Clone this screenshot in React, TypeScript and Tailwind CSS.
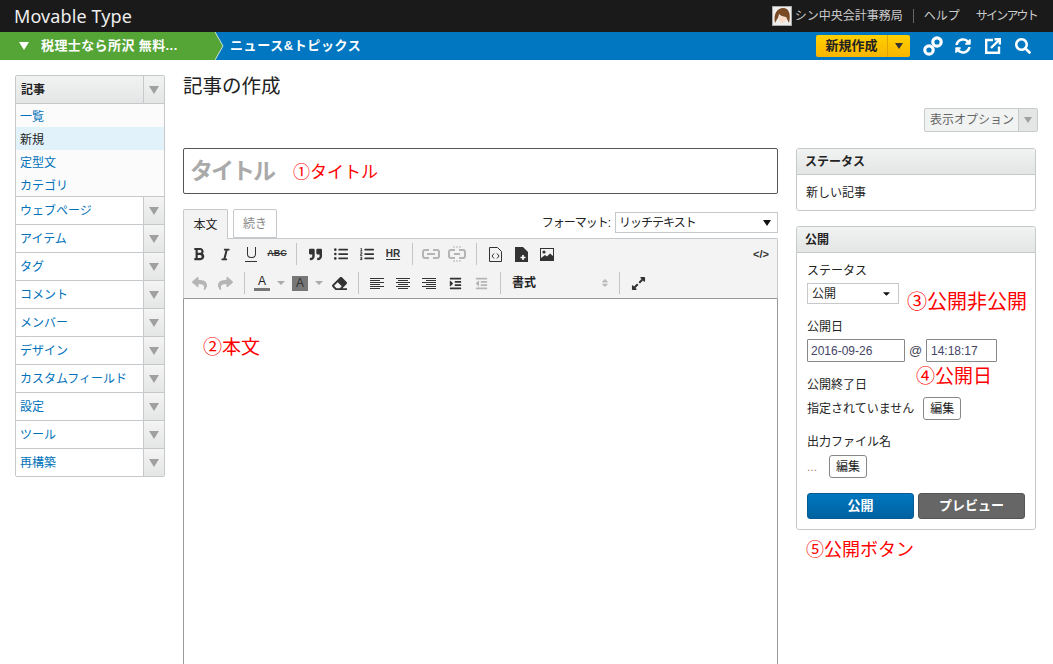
import {
  FaBold,
  FaItalic,
  FaQuoteRight,
  FaListUl,
  FaListOl,
  FaReply,
  FaShare,
  FaEraser,
  FaIndent,
  FaOutdent,
  FaExpandAlt,
  FaSyncAlt,
  FaSearch,
  FaCaretDown,
  FaSort,
} from "react-icons/fa";

const menus = ["ウェブページ", "アイテム", "タグ", "コメント", "メンバー", "デザイン", "カスタムフィールド", "設定", "ツール", "再構築"];
const subMenus = ["一覧", "新規", "定型文", "カテゴリ"];

const Tri = () => (
  <span className="w-0 h-0 border-x-[5px] border-x-transparent border-t-[8px] border-t-[#a0a0a0]" />
);

const Sep = () => (
  <span className="w-[12px] h-[22px] flex justify-center shrink-0">
    <span className="w-px h-full bg-[#c4c4c4]" />
  </span>
);

const Btn = ({ children, off }: { children: React.ReactNode; off?: boolean }) => (
  <span className={`w-[26px] h-[22px] flex items-center justify-center shrink-0 ${off ? "text-[#b5b5b5]" : "text-[#333]"}`}>
    {children}
  </span>
);

const Red = ({ children, className }: { children: React.ReactNode; className: string }) => (
  <span className={`absolute text-[#ff0000] whitespace-nowrap leading-none ${className}`}>{children}</span>
);

const PanelHead = ({ children }: { children: React.ReactNode }) => (
  <div className="h-[26px] px-[8px] flex items-center font-bold text-[#222] bg-gradient-to-b from-[#f1f2f2] to-[#e4e5e5] border-b border-[#c5c9cc] rounded-t-[3px]">
    {children}
  </div>
);

// horizontal text lines of the align buttons
const Lines = ({ rows }: { rows: [number, number][] }) => (
  <svg width="14" height="12" viewBox="0 0 14 12" stroke="#333">
    {rows.map(([a, b], i) => (
      <path key={i} d={`M${a} ${i * 2 + 1.5} H${b}`} />
    ))}
  </svg>
);

export default function App() {
  return (
    <div className="relative w-[1053px] h-[664px] overflow-hidden bg-white text-[12px] text-[#222] font-['Liberation_Sans','Noto_Sans_CJK_JP',sans-serif]">
      <header className="h-[32px] bg-[#1a1a1a] flex items-center justify-between pl-[14px] pr-[16px]">
        <span className="text-[#eee] text-[18px] font-['Noto_Sans',sans-serif] tracking-[0.1px]">Movable Type</span>
        <div className="flex items-center text-[#ccc]">
          <svg width="20" height="20" viewBox="0 0 20 20" className="mr-[3px]">
            <rect x="0.5" y="0.5" width="19" height="19" fill="#eee" stroke="#aaa" />
            <path d="M3 17 C1 7 6 2 11 2 C17 2 19 8 17 17 L14 11 C11 11 8 9 7 8 C7 11 5 13 3 17Z" fill="#7a4a25" />
            <path d="M7 9 C9 10 12 11 14 11 C15 15 12 17 10 17 C8 17 6 14 7 9Z" fill="#fbdcc8" />
          </svg>
          <span>シン中央会計事務局</span>
          <span className="w-px h-[14px] bg-[#666] mx-[10px]" />
          <span>ヘルプ</span>
          <span className="ml-[16px] tracking-[-1.8px]">サインアウト</span>
        </div>
      </header>

      <div className="h-[28px] bg-[#0077c0] flex items-center text-white font-bold text-[13px]">
        <div className="relative w-[216px] h-full bg-[#55a436] flex items-center pl-[19px]">
          <span className="w-0 h-0 border-x-[5px] border-x-transparent border-t-[8px] border-t-white mr-[12px]" />
          <span className="tracking-[0.4px]">税理士なら所沢 無料...</span>
          <svg width="9" height="28" viewBox="0 0 9 28" className="absolute left-[215px] top-0">
            <path d="M0 0 L8 14 L0 28Z" fill="#55a436" />
            <path d="M0 0 L8 14 L0 28" fill="none" stroke="#cfe3d8" />
          </svg>
        </div>
        <span className="ml-[14px] tracking-[0.6px]">ニュース&amp;トピックス</span>
        <div className="ml-auto mr-[22px] flex items-center">
          <div className="h-[22px] w-[94px] flex rounded-[2px] bg-gradient-to-b from-[#ffd000] to-[#f8b500] text-[#222] text-[13px] mr-[13px]">
            <span className="w-[72px] flex items-center justify-center border-r border-[#e3a400]">新規作成</span>
            <span className="flex-1 flex items-center justify-center">
              <span className="w-0 h-0 border-x-[4px] border-x-transparent border-t-[6px] border-t-[#333]" />
            </span>
          </div>
          <svg width="20" height="20" viewBox="0 0 20 20" fill="none" stroke="white" strokeWidth="3.2" className="mr-[12px]">
            <circle cx="6" cy="14" r="4.2" />
            <circle cx="14" cy="6" r="4.2" />
          </svg>
          <FaSyncAlt className="text-white text-[16px] mr-[14px]" />
          <svg width="16" height="16" viewBox="0 0 16 16" fill="none" stroke="white" strokeWidth="2.4" className="mr-[14px]">
            <path d="M8 2 H1.2 V14.8 H14 V8.5" />
            <path d="M6 10 L14 2" />
            <path d="M9.5 1.2 H14.8 V6.5" />
          </svg>
          <FaSearch className="text-white text-[16px]" />
        </div>
      </div>

      <div className="flex items-start">
        <nav className="w-[150px] ml-[15px] mt-[15px] shrink-0 border border-[#c5c9cc] rounded-[2px] bg-white">
          <div className="h-[28px] flex items-stretch bg-gradient-to-b from-[#f1f2f2] to-[#e4e5e5] border-b border-[#c5c9cc]">
            <span className="flex-1 flex items-center pl-[5px] font-bold">記事</span>
            <span className="w-[21px] flex items-center justify-center border-l border-[#c5c9cc]">
              <Tri />
            </span>
          </div>
          <div className="bg-[#fbfbfb]">
            {subMenus.map((m) => (
              <div
                key={m}
                className={`h-[23px] flex items-center pl-[4px] pt-[2px] ${m === "新規" ? "bg-[#e1f2fb] text-[#222]" : "text-[#0071b9]"}`}
              >
                {m}
              </div>
            ))}
          </div>
          {menus.map((m) => (
            <div key={m} className="h-[28px] flex items-stretch border-t border-[#c5c9cc] text-[#0071b9]">
              <span className="flex-1 flex items-center pl-[4px]">{m}</span>
              <span className="w-[21px] flex items-center justify-center border-l border-[#c5c9cc] bg-gradient-to-b from-[#f4f4f4] to-[#e4e5e5]">
                <Tri />
              </span>
            </div>
          ))}
        </nav>

        <main className="w-[855px] ml-[18px] shrink-0">
          <h1 className="mt-[14px] text-[19.5px] leading-[24px] font-normal text-[#222]">記事の作成</h1>
          <div className="mt-[10px] h-[24px] flex justify-end">
            <div className="h-[24px] w-[114px] flex border border-[#c9cccf] rounded-[2px] bg-[#f1f2f2] text-[#666]">
              <span className="flex-1 flex items-center pl-[5px]">表示オプション</span>
              <span className="w-[19px] flex items-center justify-center border-l border-[#c9cccf] bg-[#e4e5e5]">
                <span className="w-0 h-0 border-x-[4px] border-x-transparent border-t-[6px] border-t-[#a0a0a0]" />
              </span>
            </div>
          </div>

          <div className="mt-[16px] flex items-start">
            <div className="w-[595px] shrink-0">
              <div className="h-[46px] border border-[#555] rounded-[2px] flex items-center pl-[6px] text-[23px] font-bold text-[#aaa] tracking-[-2px]">
                タイトル
              </div>

              <div className="mt-[15px] h-[29px] flex items-start relative">
                <div className="relative z-10 w-[45px] h-[30px] flex items-center justify-center bg-[#f3f3f3] border border-b-0 border-[#c5c9cc] rounded-t-[2px]">
                  本文
                </div>
                <div className="ml-[5px] w-[44px] h-[29px] flex items-center justify-center bg-white border border-[#c5c9cc] rounded-t-[2px] text-[#888]">
                  続き
                </div>
                <span className="ml-auto mt-[3px] h-[21px] flex items-center mr-[5px] tracking-[-1px]">フォーマット:</span>
                <div className="mt-[3px] w-[163px] h-[21px] border border-[#c5c9cc] flex items-center justify-between pl-[3px] pr-[6px] tracking-[-1px]">
                  リッチテキスト
                  <span className="w-0 h-0 border-x-[4px] border-x-transparent border-t-[6px] border-t-[#111]" />
                </div>
              </div>

              <div className="h-[61px] pt-[4px] bg-[#f3f3f3] border border-[#c5c9cc] border-b-[#999] rounded-tr-[2px] pl-[2px]">
                <div className="h-[22px] flex items-center">
                  <Btn><FaBold className="text-[14px]" /></Btn>
                  <Btn><FaItalic className="text-[13px]" /></Btn>
                  <Btn>
                    <span className="w-[12px] h-[15px] relative flex justify-center">
                      <span className="w-[9px] h-[11px] border-x border-b border-[#333] rounded-b-[4px]" />
                      <span className="absolute bottom-0 left-0 w-full h-px bg-[#333]" />
                    </span>
                  </Btn>
                  <Btn><span className="text-[9px] font-bold line-through">ABC</span></Btn>
                  <Sep />
                  <Btn><FaQuoteRight className="text-[13px]" /></Btn>
                  <Btn><FaListUl className="text-[14px]" /></Btn>
                  <Btn><FaListOl className="text-[14px]" /></Btn>
                  <Btn><span className="text-[10px] font-bold leading-[11px] border-b border-[#333]">HR</span></Btn>
                  <Sep />
                  <Btn off>
                    <svg width="18" height="10" viewBox="0 0 18 10" fill="none" stroke="#b5b5b5" strokeWidth="2">
                      <path d="M7 1 H3 Q1 1 1 3 V7 Q1 9 3 9 H7 M11 1 H15 Q17 1 17 3 V7 Q17 9 15 9 H11 M5 5 H13" />
                    </svg>
                  </Btn>
                  <Btn off>
                    <svg width="18" height="16" viewBox="0 0 18 16" fill="none" stroke="#b5b5b5" strokeWidth="2">
                      <path d="M7 4 H3 Q1 4 1 6 V10 Q1 12 3 12 H7 M11 4 H15 Q17 4 17 6 V10 Q17 12 15 12 H11 M6 8 H12" />
                      <path d="M6 0 V2 M9 0 V2 M12 0 V2 M6 14 V16 M9 14 V16 M12 14 V16" strokeWidth="1" />
                    </svg>
                  </Btn>
                  <Sep />
                  <Btn>
                    <svg width="13" height="15" viewBox="0 0 13 15" fill="none" stroke="#333">
                      <path d="M0.5 0.5 H8.5 L12.5 4.5 V14.5 H0.5Z" />
                      <path d="M5 6.5 L3 9 L5 11.5 M8 6.5 L10 9 L8 11.5" />
                    </svg>
                  </Btn>
                  <Btn>
                    <svg width="13" height="15" viewBox="0 0 13 15">
                      <path d="M0 0 H8 L13 5 V15 H0Z" fill="#333" />
                      <path d="M8 8 V13 M5.5 10.5 H10.5" stroke="#fff" strokeWidth="1.6" />
                    </svg>
                  </Btn>
                  <Btn>
                    <svg width="14" height="13" viewBox="0 0 14 13">
                      <rect x="0.5" y="0.5" width="13" height="12" fill="#f3f3f3" stroke="#333" />
                      <circle cx="4" cy="4" r="1.6" fill="#333" />
                      <path d="M1 12 V10 L5 7 L7 8.5 L10 5.5 L13 8 V12Z" fill="#333" />
                    </svg>
                  </Btn>
                  <span className="ml-auto mr-[8px] text-[11px] font-bold text-[#333]">&lt;/&gt;</span>
                </div>
                <div className="mt-[7px] h-[22px] flex items-center">
                  <Btn off><FaReply className="text-[15px]" /></Btn>
                  <Btn off><FaShare className="text-[15px]" /></Btn>
                  <Sep />
                  <span className="w-[24px] h-[22px] flex items-center justify-center shrink-0">
                    <span className="w-[16px] text-center text-[12px] leading-[13px] border-b-[3px] border-[#777]">A</span>
                  </span>
                  <span className="w-[14px] flex justify-center">
                    <span className="w-0 h-0 border-x-[4px] border-x-transparent border-t-[4px] border-t-[#aaa]" />
                  </span>
                  <span className="w-[24px] flex justify-center">
                    <span className="w-[16px] h-[15px] bg-[#777] flex items-center justify-center text-[#333] text-[12px]">A</span>
                  </span>
                  <span className="w-[14px] flex justify-center">
                    <span className="w-0 h-0 border-x-[4px] border-x-transparent border-t-[4px] border-t-[#aaa]" />
                  </span>
                  <Btn><FaEraser className="text-[15px]" /></Btn>
                  <Sep />
                  <Btn><Lines rows={[[0, 14], [0, 10], [0, 14], [0, 10], [0, 14], [0, 10]]} /></Btn>
                  <Btn><Lines rows={[[0, 14], [2, 12], [0, 14], [2, 12], [0, 14], [2, 12]]} /></Btn>
                  <Btn><Lines rows={[[0, 14], [4, 14], [0, 14], [4, 14], [0, 14], [4, 14]]} /></Btn>
                  <Btn><FaIndent className="text-[13px]" /></Btn>
                  <Btn off><FaOutdent className="text-[13px]" /></Btn>
                  <Sep />
                  <span className="w-[107px] pl-[6px] pr-[3px] flex items-center justify-between font-bold shrink-0">
                    書式
                    <FaSort className="text-[#bbb] text-[10px]" />
                  </span>
                  <Sep />
                  <Btn><FaExpandAlt className="text-[15px]" /></Btn>
                </div>
              </div>

              <div className="h-[400px] border-x border-[#999] bg-white" />
            </div>

            <aside className="ml-[18px] w-[240px] shrink-0">
              <div className="h-[63px] border border-[#c5c9cc] rounded-[3px]">
                <PanelHead>ステータス</PanelHead>
                <div className="px-[9px] pt-[9px]">新しい記事</div>
              </div>

              <div className="mt-[15px] h-[304px] border border-[#c5c9cc] rounded-[3px]">
                <PanelHead>公開</PanelHead>
                <div className="px-[10px]">
                  <div className="mt-[10px] leading-[16px]">ステータス</div>
                  <div className="mt-[4px] w-[92px] h-[21px] border border-[#c5c9cc] flex items-center justify-between pl-[4px] pr-[6px]">
                    公開
                    <FaCaretDown className="text-[11px] text-[#111]" />
                  </div>
                  <div className="mt-[15px] leading-[16px]">公開日</div>
                  <div className="mt-[4px] flex items-center">
                    <span className="w-[98px] h-[23px] border border-[#888] rounded-[1px] flex items-center pl-[3px] text-[#446]">2016-09-26</span>
                    <span className="w-[21px] text-center text-[13px] text-[#445]">@</span>
                    <span className="w-[71px] h-[23px] border border-[#888] rounded-[1px] flex items-center pl-[4px] text-[#446]">14:18:17</span>
                  </div>
                  <div className="mt-[15px] leading-[16px]">公開終了日</div>
                  <div className="mt-[4px] flex items-center">
                    <span>指定されていません</span>
                    <span className="ml-[9px] w-[38px] h-[23px] border border-[#888] rounded-[3px] flex items-center justify-center">編集</span>
                  </div>
                  <div className="mt-[14px] leading-[16px]">出力ファイル名</div>
                  <div className="mt-[5px] flex items-center">
                    <span className="w-[22px] text-[#a87]">...</span>
                    <span className="w-[38px] h-[23px] border border-[#888] rounded-[3px] flex items-center justify-center">編集</span>
                  </div>
                  <div className="mt-[15px] flex gap-[4px] font-bold text-[13px] text-white">
                    <span className="w-[107px] h-[26px] rounded-[3px] border border-[#055a92] bg-gradient-to-b from-[#0077c0] to-[#0062a0] flex items-center justify-center">公開</span>
                    <span className="w-[107px] h-[26px] rounded-[3px] border border-[#555] bg-[#666] flex items-center justify-center">プレビュー</span>
                  </div>
                </div>
              </div>
            </aside>
          </div>
        </main>
      </div>

      <Red className="left-[293px] top-[164px] text-[17px]">①タイトル</Red>
      <Red className="left-[203px] top-[338px] text-[19px]">②本文</Red>
      <Red className="left-[907px] top-[292px] text-[20px]">③公開非公開</Red>
      <Red className="left-[916px] top-[367px] text-[19px]">④公開日</Red>
      <Red className="left-[806px] top-[541px] text-[18px]">⑤公開ボタン</Red>
    </div>
  );
}
